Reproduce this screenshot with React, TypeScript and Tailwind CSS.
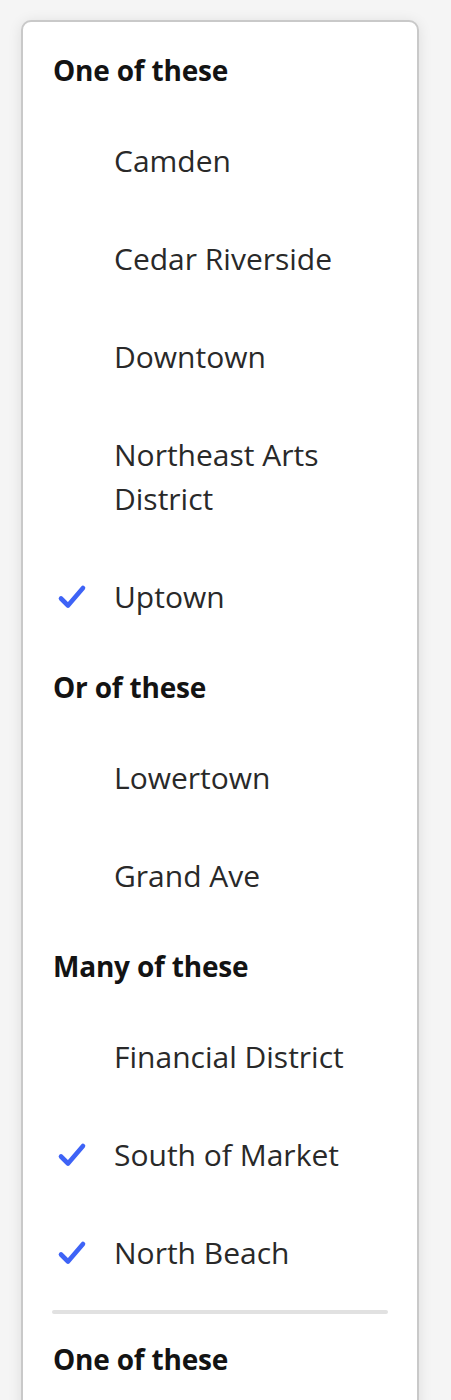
import React from "react";

interface Item {
	label: string;
	selected?: boolean;
}

interface Section {
	title: string;
	items: Item[];
}

const sections: Section[] = [
	{
		title: "One of these",
		items: [
			{ label: "Camden" },
			{ label: "Cedar Riverside" },
			{ label: "Downtown" },
			{ label: "Northeast Arts District" },
			{ label: "Uptown", selected: true },
		],
	},
	{
		title: "Or of these",
		items: [{ label: "Lowertown" }, { label: "Grand Ave" }],
	},
	{
		title: "Many of these",
		items: [
			{ label: "Financial District" },
			{ label: "South of Market", selected: true },
			{ label: "North Beach", selected: true },
		],
	},
];

const extra: Section = {
	title: "One of these",
	items: [],
};

const CheckIcon: React.FC = () => (
	<svg width="30" height="26" viewBox="0 0 30 26" fill="none" aria-hidden>
		<path d="M4 14.5L11 21.5L26 4" stroke="#3e63f6" strokeWidth="4.6" strokeLinecap="round" strokeLinejoin="round" />
	</svg>
);

const MenuItem: React.FC<{ item: Item }> = ({ item }) => (
	<div role="menuitemcheckbox" aria-checked={!!item.selected} className="flex items-start pl-[34px] pr-[30px] pt-[28px] pb-[26px]">
		<span className="w-[30px] h-[44px] flex items-center shrink-0">{item.selected && <CheckIcon />}</span>
		<span className="ml-[27px] text-[30px] leading-[44px] text-[#292929]">{item.label}</span>
	</div>
);

const SectionBlock: React.FC<{ section: Section; first?: boolean }> = ({ section, first }) => (
	<div role="group">
		<div className={`px-[30px] ${first ? "pt-[19px]" : "pt-[21px]"} pb-[19px] text-[28px] leading-[43px] font-bold text-[#131313] tracking-[-0.2px]`}>{section.title}</div>
		{section.items.map((item) => (
			<MenuItem key={item.label} item={item} />
		))}
	</div>
);

export default function App() {
	return (
		<div className="h-[1400px] bg-[#f5f5f5] pt-[20px] pl-[21px] overflow-hidden" style={{ fontFamily: '"Open Sans", "Noto Sans", sans-serif' }}>
			<div role="menu" className="w-[398px] rounded-[10px] border-2 border-[#c9c9c9] bg-white pt-[8px] pb-[80px] shadow-[0_2px_14px_rgba(0,0,0,0.10)]">
				{sections.map((s, i) => (
					<SectionBlock key={i} section={s} first={i === 0} />
				))}
				<div className="mx-[29px] mt-[9px] mb-[3px] h-[4px] rounded-full bg-[#e1e1e1]" />
				<SectionBlock section={extra} />
			</div>
		</div>
	);
}
